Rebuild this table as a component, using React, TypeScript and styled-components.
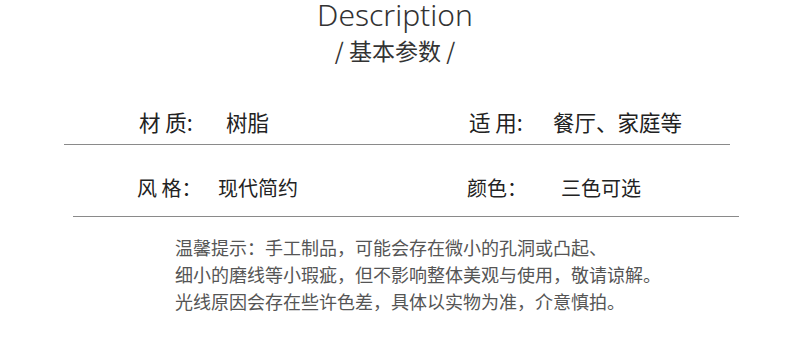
import React from 'react'
import styled, { createGlobalStyle } from 'styled-components'

const GlobalStyle = createGlobalStyle`
  html, body {
    margin: 0;
    padding: 0;
    background: #fff;
  }
  body {
    font-family: "Noto Sans", "Noto Sans CJK SC", sans-serif;
  }
`

type Spec = {
    label: string,
    value: string
}

type RowData = {
    indent: number,
    lead: number,
    cols: string,
    size: number,
    padTop: number,
    padBottom: number,
    cells: Spec[]
}

const rows: RowData[] = [
    {
        indent: 64,
        lead: 75,
        cols: '87px 243px 84px 1fr',
        size: 21.5,
        padTop: 10,
        padBottom: 10,
        cells: [
            { label: '材 质:', value: '树脂' },
            { label: '适 用:', value: '餐厅、家庭等' }
        ]
    },
    {
        indent: 73,
        lead: 64,
        cols: '81px 249px 94px 1fr',
        size: 20,
        padTop: 31,
        padBottom: 16,
        cells: [
            { label: '风 格：', value: '现代简约' },
            { label: '颜色：', value: '三色可选' }
        ]
    }
]

const notes = [
    '温馨提示：手工制品，可能会存在微小的孔洞或凸起、',
    '细小的磨线等小瑕疵，但不影响整体美观与使用，敬请谅解。',
    '光线原因会存在些许色差，具体以实物为准，介意慎拍。'
]

const App: React.FC = () => {
    return (
        <Page>
            <GlobalStyle />
            <Header>
                <Title>Description</Title>
                <Subtitle>/ 基本参数 /</Subtitle>
            </Header>
            <Table>
                {rows.map((row, i) => (
                    <Row
                        key={i}
                        $indent={row.indent}
                        $lead={row.lead}
                        $cols={row.cols}
                        $size={row.size}
                        $padTop={row.padTop}
                        $padBottom={row.padBottom}
                    >
                        {row.cells.map((c) => (
                            <React.Fragment key={c.label}>
                                <Label>{c.label}</Label>
                                <Value>{c.value}</Value>
                            </React.Fragment>
                        ))}
                    </Row>
                ))}
            </Table>
            <Notice>
                {notes.map((n) => (
                    <p key={n}>{n}</p>
                ))}
            </Notice>
        </Page>
    )
}

const Page = styled.div`
    width: 790px;
    height: 342px;
    overflow: hidden;
    background: #fff;
`

const Header = styled.header`
    display: flex;
    flex-direction: column;
    align-items: center;
    padding-top: 1px;
`

const Title = styled.h1`
    margin: 0;
    font-family: "Noto Sans", sans-serif;
    font-weight: 350;
    font-size: 30px;
    line-height: 28px;
    color: #333;
`

const Subtitle = styled.h2`
    margin: 7px 0 0;
    font-family: "Noto Sans CJK SC", sans-serif;
    font-weight: 400;
    font-size: 23px;
    line-height: 28px;
    color: #333;
`

const Table = styled.div`
    margin-top: 36px;
    display: flex;
    flex-direction: column;
`

const Row = styled.div<{ $indent: number, $lead: number, $cols: string, $size: number, $padTop: number, $padBottom: number }>`
    display: grid;
    grid-template-columns: ${(p) => p.$cols};
    align-items: center;
    width: 666px;
    box-sizing: border-box;
    margin-left: ${(p) => p.$indent}px;
    padding: ${(p) => p.$padTop}px 0 ${(p) => p.$padBottom}px ${(p) => p.$lead}px;
    border-bottom: 1px solid #8a8a8a;
    font-family: "Noto Sans CJK SC", sans-serif;
    font-size: ${(p) => p.$size}px;
    line-height: 24px;
    color: #222;
`

const Label = styled.span`
    white-space: pre;
`

const Value = styled.span`
    white-space: nowrap;
`

const Notice = styled.div`
    margin: 17px 0 0 175px;
    font-family: "Noto Sans CJK SC", sans-serif;
    font-size: 18px;
    line-height: 27px;
    color: #555;

    p {
        margin: 0;
    }
`

export default App
